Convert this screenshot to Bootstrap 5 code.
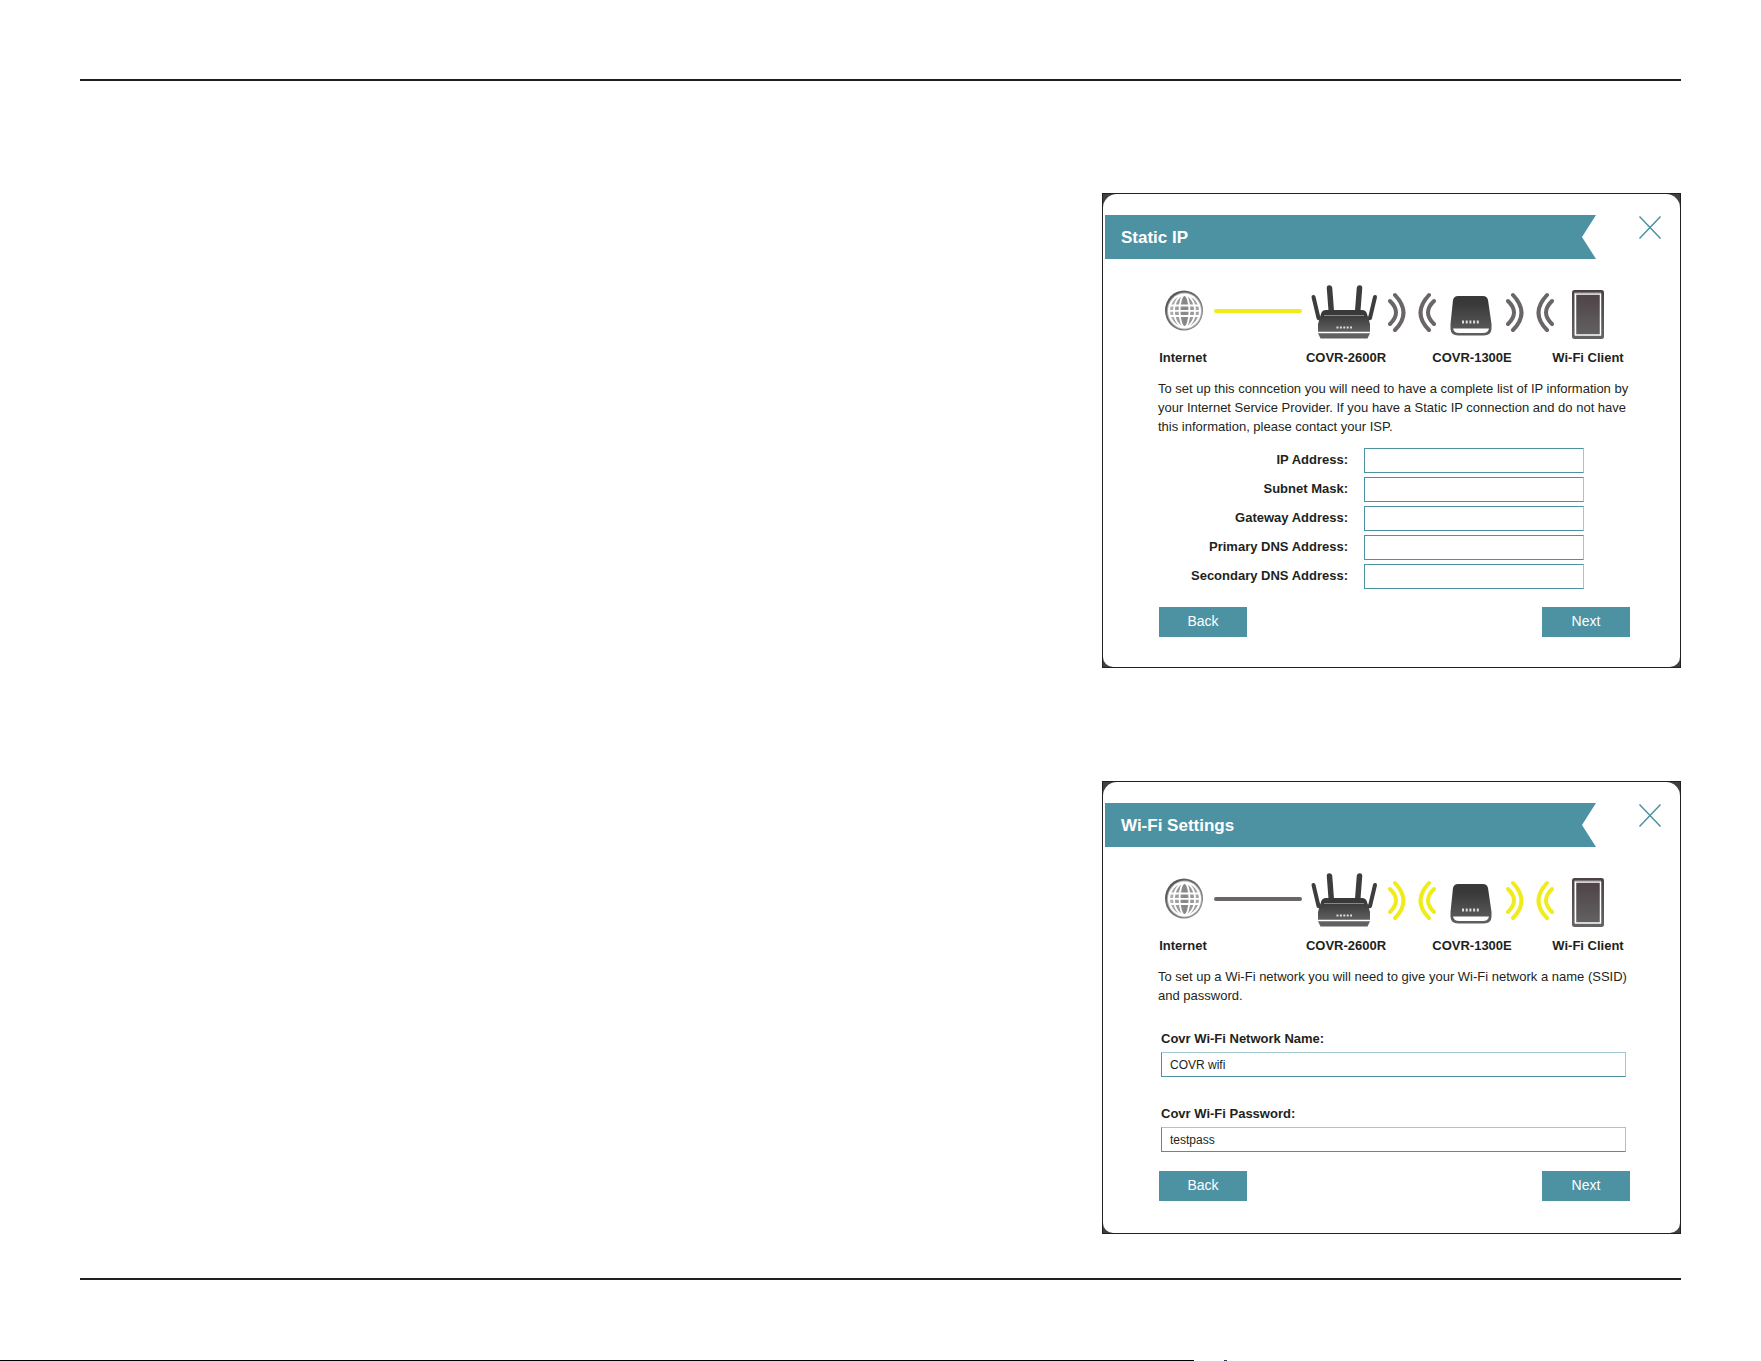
<!DOCTYPE html>
<html lang="en">
<head>
<meta charset="utf-8">
<meta name="viewport" content="width=device-width, initial-scale=1">
<title>COVR Setup Wizard</title>
<link href="https://cdn.jsdelivr.net/npm/bootstrap@5.3.0/dist/css/bootstrap.min.css" rel="stylesheet">
<style>
  :root { --teal: #4c92a3; --teal-soft: #a3c7d0; --ink: #231f20; --signal-off: #6a6667; --signal-on: #f0ec1c; }
  body { font-family: "Liberation Sans", Arial, sans-serif; font-size: 13px; line-height: 19px; color: var(--ink); background: #fff; }
  .sheet { margin: 79px 80px 0; padding-top: 112px; padding-bottom: 44px; border-top: 2px solid var(--ink); border-bottom: 2px solid var(--ink); gap: 113px; }
  .wizard { width: 579px; max-width: 100%; border: 1px solid var(--ink); background: #414042; }
  .wizard-face { background: #fff; border-radius: 14px 14px 10px 10px; padding: 21px 0 30px; }
  .wizard-face.tall-foot { padding-bottom: 32px; }
  .banner { width: 491px; height: 44px; margin-left: 2px; padding: 2px 0 0 16px; background: var(--teal); clip-path: polygon(0 0, 100% 0, calc(100% - 14px) 50%, 100% 100%, 0 100%); }
  .banner h2 { font-size: 17px; line-height: 22px; font-weight: 700; color: #fff; }
  .close-x { margin-right: 18px; width: 24px; height: 24px; color: var(--teal); line-height: 0; }
  .wizard-body { padding: 25px 50px 0 55px; }
  .topology { height: 82px; margin-bottom: 13px; }
  .topology svg { display: block; flex: none; }
  .device { display: flex; flex-direction: column; align-items: center; gap: 8px; flex: none; }
  .device span { font-weight: 700; line-height: 20px; white-space: nowrap; }
  .dev-globe { width: 50px; } .dev-router { width: 70px; } .dev-node { width: 44px; } .dev-tablet { width: 32px; }
  .cable { margin: 0 9px 0 6px; }
  .signals { gap: 12px; margin: 0 14px 0 7px; }
  .signals.to-client { margin: 0 18px 0 12px; }
  .on { color: var(--signal-on); } .off { color: var(--signal-off); }
  .field-grid { display: grid; grid-template-columns: 190px 220px; column-gap: 16px; row-gap: 4px; margin: 12px 0 18px; }
  .field-grid label { text-align: right; line-height: 24px; }
  label { font-weight: 700; }
  .wizard .form-control { height: 25px; padding: 0 8px; border: 1px solid var(--teal); border-right-color: var(--teal-soft); border-radius: 0; font-size: 12px; color: var(--ink); }
  .wifi-fields { margin: 24px 0 19px; padding: 0 4px 0 3px; display: grid; row-gap: 27px; }
  .wifi-fields label { display: block; margin-bottom: 4px; }
  .wifi-fields .form-control { border-top-color: var(--teal-soft); }
  .steps { padding-left: 1px; }
  .btn-step { width: 88px; height: 30px; padding: 0 0 3px; border: 0; border-radius: 0; background: var(--teal); color: #fff; font-size: 14px; line-height: 20px; }
  .btn-step:hover { background: #3d8091; color: #fff; }
  .page-edge { height: 1px; background: linear-gradient(#000 0 0) 0 0 / 67.8% 1px no-repeat, linear-gradient(#335 0 0) 69.6% 0 / 3px 1px no-repeat; }
</style>
<script src="https://cdn.jsdelivr.net/npm/bootstrap@5.3.0/dist/js/bootstrap.bundle.min.js"></script>
</head>
<body class="d-flex flex-column min-vh-100">

<!-- Shared device drawings -->
<svg width="0" height="0" class="position-absolute" aria-hidden="true">
  <defs>
    <linearGradient id="bodyShade" x1="0" y1="0" x2="0" y2="1"><stop offset="0.2" stop-color="#393939"/><stop offset="1" stop-color="#606060"/></linearGradient>
    <linearGradient id="screenShade" x1="0" y1="0" x2="0" y2="1"><stop offset="0" stop-color="#4d4044"/><stop offset="1" stop-color="#646464"/></linearGradient>
    <linearGradient id="globeRim" x1="0" y1="0" x2="1" y2="1"><stop offset="0" stop-color="#4e4e4e"/><stop offset="1" stop-color="#8f8f8f"/></linearGradient>
    <linearGradient id="globeFill" x1="0" y1="0" x2="1" y2="0"><stop offset="0" stop-color="#b4b4b4"/><stop offset=".5" stop-color="#868686"/><stop offset="1" stop-color="#a8a8a8"/></linearGradient>
  </defs>
  <symbol id="globe" viewBox="0 0 50 56">
    <ellipse cx="26" cy="26.500" rx="19" ry="20" fill="url(#globeRim)"/>
    <ellipse cx="26.500" cy="27" rx="17.500" ry="18.500" fill="#b5b5b5"/>
    <ellipse cx="26.500" cy="27" rx="16.500" ry="17.500" fill="#fff"/>
    <ellipse cx="26.500" cy="27" rx="14.500" ry="15.500" fill="url(#globeFill)"/>
    <g fill="none" stroke="#fff" stroke-width="1.800">
      <path d="M12 21.500H41M11 32H42M12 26.800H41" />
      <ellipse cx="26.500" cy="27" rx="5" ry="16"/>
      <ellipse cx="26.500" cy="27" rx="10.500" ry="16"/>
    </g>
  </symbol>
  <symbol id="router" viewBox="0 0 70 56">
    <g stroke="#3d3d3d" stroke-linecap="round" stroke-linejoin="round" fill="none">
      <path d="M2.500 13L7.500 34L11 35" stroke-width="4"/><path d="M64 13L59 34L55 35" stroke-width="4"/>
      <path d="M18.500 4L20.500 30" stroke-width="5.500"/><path d="M48.500 4L46.500 30" stroke-width="5.500"/>
    </g>
    <path d="M10 30Q11 26 15 26H51Q55 26 56 30L59 40V48H7V40Z" fill="url(#bodyShade)"/>
    <path d="M13 31.500H53" stroke="#888" stroke-width="1"/>
    <path d="M7 48.500H59" stroke="#fff" stroke-width="1.500"/>
    <path d="M7 49.300H59L56.500 54.500H9.500Z" fill="#606060"/>
    <path d="M25.500 43.500H41" stroke="#ddd" stroke-width="2" stroke-dasharray="2 1.400"/>
  </symbol>
  <symbol id="extender" viewBox="0 0 44 56">
    <path d="M8 12H33Q37 12 38 16L41.500 40V45Q41 51.500 34 51.500H8Q1 51.500 0.500 45V40L3 16Q4 12 8 12Z" fill="url(#bodyShade)"/>
    <path d="M3 44.500H39Q38 49 33 49H9Q4 49 3 44.500Z" fill="#fff"/>
    <path d="M12 38H29.500" stroke="#ddd" stroke-width="3" stroke-dasharray="2 1.700"/>
  </symbol>
  <symbol id="tablet" viewBox="0 0 32 56">
    <rect x="0" y="6" width="32" height="49" rx="2.500" fill="url(#screenShade)"/>
    <rect x="3.500" y="10" width="25" height="41" fill="none" stroke="#fff" stroke-width="1.500"/>
    <path d="M2.500 51V9H29" stroke="#a8a8a8" fill="none"/>
  </symbol>
  <symbol id="waveOut" viewBox="0 0 18 56">
    <g fill="none" stroke="currentColor" stroke-width="4" stroke-linecap="round"><path d="M2 17Q14 28.500 2 40"/><path d="M7 11Q24 29 7 46"/></g>
  </symbol>
  <symbol id="waveIn" viewBox="0 0 18 56">
    <g fill="none" stroke="currentColor" stroke-width="4" stroke-linecap="round"><path d="M16 17Q4 28.500 16 40"/><path d="M11 11Q-6 29 11 46"/></g>
  </symbol>
  <symbol id="cable" viewBox="0 0 88 56"><path d="M2 27H86" stroke="currentColor" stroke-width="4" stroke-linecap="round"/></symbol>
  <symbol id="cross" viewBox="0 0 24 24"><path d="M1.500 1.500L22.500 23.500M22.500 1.500L1.500 23.500" stroke="currentColor" stroke-width="1.500"/></symbol>
</svg>

<main class="sheet d-flex flex-column align-items-end">
  <section class="wizard" aria-labelledby="staticTitle">
    <div class="wizard-face">
      <header class="d-flex justify-content-between align-items-start">
        <div class="banner d-flex align-items-center"><h2 class="m-0" id="staticTitle">Static IP</h2></div>
        <button type="button" class="close-x btn p-0 border-0" aria-label="Close"><svg width="24" height="24"><use href="#cross"/></svg></button>
      </header>
      <form class="wizard-body">
        <div class="topology d-flex">
          <div class="device dev-globe"><svg width="50" height="56"><use href="#globe"/></svg><span>Internet</span></div>
          <svg class="cable on" width="88" height="56"><use href="#cable"/></svg>
          <div class="device dev-router"><svg width="70" height="56"><use href="#router"/></svg><span>COVR-2600R</span></div>
          <div class="signals d-flex off"><svg width="18" height="56"><use href="#waveOut"/></svg><svg width="18" height="56"><use href="#waveIn"/></svg></div>
          <div class="device dev-node"><svg width="44" height="56"><use href="#extender"/></svg><span>COVR-1300E</span></div>
          <div class="signals to-client d-flex off"><svg width="18" height="56"><use href="#waveOut"/></svg><svg width="18" height="56"><use href="#waveIn"/></svg></div>
          <div class="device dev-tablet"><svg width="32" height="56"><use href="#tablet"/></svg><span>Wi-Fi Client</span></div>
        </div>
        <p class="m-0">To set up this conncetion you will need to have a complete list of IP information by your Internet Service Provider. If you have a Static IP connection and do not have this information, please contact your ISP.</p>
        <div class="field-grid">
          <label for="ip">IP Address:</label><input id="ip" type="text" class="form-control">
          <label for="mask">Subnet Mask:</label><input id="mask" type="text" class="form-control">
          <label for="gateway">Gateway Address:</label><input id="gateway" type="text" class="form-control">
          <label for="dns1">Primary DNS Address:</label><input id="dns1" type="text" class="form-control">
          <label for="dns2">Secondary DNS Address:</label><input id="dns2" type="text" class="form-control">
        </div>
        <div class="steps d-flex justify-content-between">
          <button type="button" class="btn btn-step">Back</button>
          <button type="button" class="btn btn-step">Next</button>
        </div>
      </form>
    </div>
  </section>

  <section class="wizard" aria-labelledby="wifiTitle">
    <div class="wizard-face tall-foot">
      <header class="d-flex justify-content-between align-items-start">
        <div class="banner d-flex align-items-center"><h2 class="m-0" id="wifiTitle">Wi-Fi Settings</h2></div>
        <button type="button" class="close-x btn p-0 border-0" aria-label="Close"><svg width="24" height="24"><use href="#cross"/></svg></button>
      </header>
      <form class="wizard-body">
        <div class="topology d-flex">
          <div class="device dev-globe"><svg width="50" height="56"><use href="#globe"/></svg><span>Internet</span></div>
          <svg class="cable off" width="88" height="56"><use href="#cable"/></svg>
          <div class="device dev-router"><svg width="70" height="56"><use href="#router"/></svg><span>COVR-2600R</span></div>
          <div class="signals d-flex on"><svg width="18" height="56"><use href="#waveOut"/></svg><svg width="18" height="56"><use href="#waveIn"/></svg></div>
          <div class="device dev-node"><svg width="44" height="56"><use href="#extender"/></svg><span>COVR-1300E</span></div>
          <div class="signals to-client d-flex on"><svg width="18" height="56"><use href="#waveOut"/></svg><svg width="18" height="56"><use href="#waveIn"/></svg></div>
          <div class="device dev-tablet"><svg width="32" height="56"><use href="#tablet"/></svg><span>Wi-Fi Client</span></div>
        </div>
        <p class="m-0">To set up a Wi-Fi network you will need to give your Wi-Fi network a name (SSID) and password.</p>
        <div class="wifi-fields">
          <div><label for="ssid">Covr Wi-Fi Network Name:</label><input id="ssid" type="text" class="form-control" value="COVR wifi"></div>
          <div><label for="pass">Covr Wi-Fi Password:</label><input id="pass" type="text" class="form-control" value="testpass"></div>
        </div>
        <div class="steps d-flex justify-content-between">
          <button type="button" class="btn btn-step">Back</button>
          <button type="button" class="btn btn-step">Next</button>
        </div>
      </form>
    </div>
  </section>
</main>
<div class="page-edge mt-auto"></div>
</body>
</html>
